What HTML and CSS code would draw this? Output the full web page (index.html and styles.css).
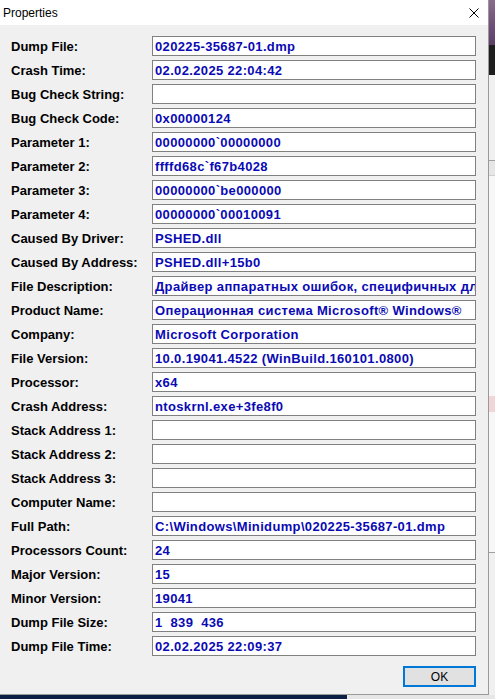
FILE: index.html
```html
<!DOCTYPE html>
<html>
<head>
<meta charset="utf-8">
<link rel="stylesheet" href="styles.css">
</head>
<body>
<div class="screen">
  <div class="top">
    <div class="dialog">
      <div class="titlebar">
        <span class="title">Properties</span>
        <svg class="close" width="10" height="10" viewBox="0 0 10 10"><path d="M0.5 0.5 L9.5 9.5 M9.5 0.5 L0.5 9.5" stroke="#000" stroke-width="1" fill="none"/></svg>
      </div>
      <div class="content">
        <div class="grid">
          <div class="label">Dump File:</div><div class="field">020225-35687-01.dmp</div>
          <div class="label">Crash Time:</div><div class="field">02.02.2025 22:04:42</div>
          <div class="label">Bug Check String:</div><div class="field"></div>
          <div class="label">Bug Check Code:</div><div class="field">0x00000124</div>
          <div class="label">Parameter 1:</div><div class="field">00000000`00000000</div>
          <div class="label">Parameter 2:</div><div class="field">ffffd68c`f67b4028</div>
          <div class="label">Parameter 3:</div><div class="field">00000000`be000000</div>
          <div class="label">Parameter 4:</div><div class="field">00000000`00010091</div>
          <div class="label">Caused By Driver:</div><div class="field">PSHED.dll</div>
          <div class="label">Caused By Address:</div><div class="field">PSHED.dll+15b0</div>
          <div class="label">File Description:</div><div class="field">Драйвер аппаратных ошибок, специфичных для платформы</div>
          <div class="label">Product Name:</div><div class="field">Операционная система Microsoft® Windows®</div>
          <div class="label">Company:</div><div class="field">Microsoft Corporation</div>
          <div class="label">File Version:</div><div class="field">10.0.19041.4522 (WinBuild.160101.0800)</div>
          <div class="label">Processor:</div><div class="field">x64</div>
          <div class="label">Crash Address:</div><div class="field">ntoskrnl.exe+3fe8f0</div>
          <div class="label">Stack Address 1:</div><div class="field"></div>
          <div class="label">Stack Address 2:</div><div class="field"></div>
          <div class="label">Stack Address 3:</div><div class="field"></div>
          <div class="label">Computer Name:</div><div class="field"></div>
          <div class="label">Full Path:</div><div class="field">C:\Windows\Minidump\020225-35687-01.dmp</div>
          <div class="label">Processors Count:</div><div class="field">24</div>
          <div class="label">Major Version:</div><div class="field">15</div>
          <div class="label">Minor Version:</div><div class="field">19041</div>
          <div class="label">Dump File Size:</div><div class="field">1  839  436</div>
          <div class="label">Dump File Time:</div><div class="field">02.02.2025 22:09:37</div>
        </div>
        <div class="actions"><button class="ok">OK</button></div>
      </div>
    </div>
    <div class="strip">
      <div class="seg purple"></div>
      <div class="seg dark"></div>
      <div class="seg light1"></div>
      <div class="seg line"></div>
      <div class="seg light2"></div>
      <div class="seg line2"></div>
      <div class="seg list"></div>
      <div class="seg pink"></div>
      <div class="seg list2"></div>
      <div class="seg line"></div>
      <div class="seg rest"></div>
    </div>
  </div>
  <div class="taskbar"><div class="navy"></div><div class="tgray"></div></div>
</div>
</body>
</html>
```

FILE: styles.css
```css
html, body {
  margin: 0;
  padding: 0;
  overflow: hidden;
  background: #f0f0f0;
}
.screen {
  width: 495px;
  height: 699px;
  display: flex;
  flex-direction: column;
}
.top {
  display: flex;
  height: 695px;
}
.dialog {
  width: 488px;
  height: 694px;
  border-right: 1px solid #9a9a9a;
  border-bottom: 1px solid #9a9a9a;
  background: #f0f0f0;
  display: flex;
  flex-direction: column;
}
.titlebar {
  height: 25px;
  background: #ffffff;
  display: flex;
  align-items: center;
  justify-content: space-between;
  padding: 0 9px 0 3px;
}
.title {
  font-family: "Liberation Sans", Arial, sans-serif;
  font-size: 12px;
  color: #000;
}
.close {
  display: block;
}
.content {
  padding: 11px 12px 0 11px;
}
.grid {
  display: grid;
  grid-template-columns: 141px 324px;
  grid-auto-rows: 20px;
  row-gap: 4px;
}
.label {
  font-family: "Liberation Sans", Arial, sans-serif;
  font-weight: bold;
  font-size: 13px;
  color: #000;
  line-height: 21px;
  white-space: nowrap;
}
.field {
  box-sizing: border-box;
  height: 20px;
  border: 1px solid #808080;
  background: #fff;
  font-family: "Liberation Sans", Arial, sans-serif;
  font-weight: bold;
  font-size: 13px;
  letter-spacing: 0.35px;
  color: #0a0ab4;
  line-height: 19px;
  padding-left: 2px;
  white-space: pre;
  overflow: hidden;
}
.actions {
  display: flex;
  justify-content: flex-end;
  margin-top: 10px;
}
.ok {
  box-sizing: border-box;
  width: 73px;
  height: 21px;
  border: 2px solid #0078d7;
  background: #e1e1e1;
  font-family: "Liberation Sans", Arial, sans-serif;
  font-size: 12px;
  color: #000;
  padding: 0;
  margin: 0;
}
.strip {
  flex: 1;
  display: flex;
  flex-direction: column;
}
.seg { flex: none; }
.purple { height: 45px; background: linear-gradient(180deg, #8a6a8c 0%, #6e4e78 60%, #5b3f66 100%); }
.dark { height: 30px; background: #1e1e1e; }
.light1 { height: 85px; background: #f0f0f0; }
.line { height: 1px; background: #a0a0a0; }
.light2 { height: 14px; background: #e6e6e6; }
.line2 { height: 1px; background: #cfcfcf; }
.list { height: 220px; background: #f7f7f7; }
.pink { height: 16px; background: #f0d6d6; }
.list2 { height: 140px; background: #f7f7f7; }
.rest { flex: 1; background: #f0f0f0; }
.taskbar {
  height: 4px;
  display: flex;
}
.navy { width: 347px; background: #0b1f44; }
.tgray { flex: 1; background: #e6e6e6; }
```
